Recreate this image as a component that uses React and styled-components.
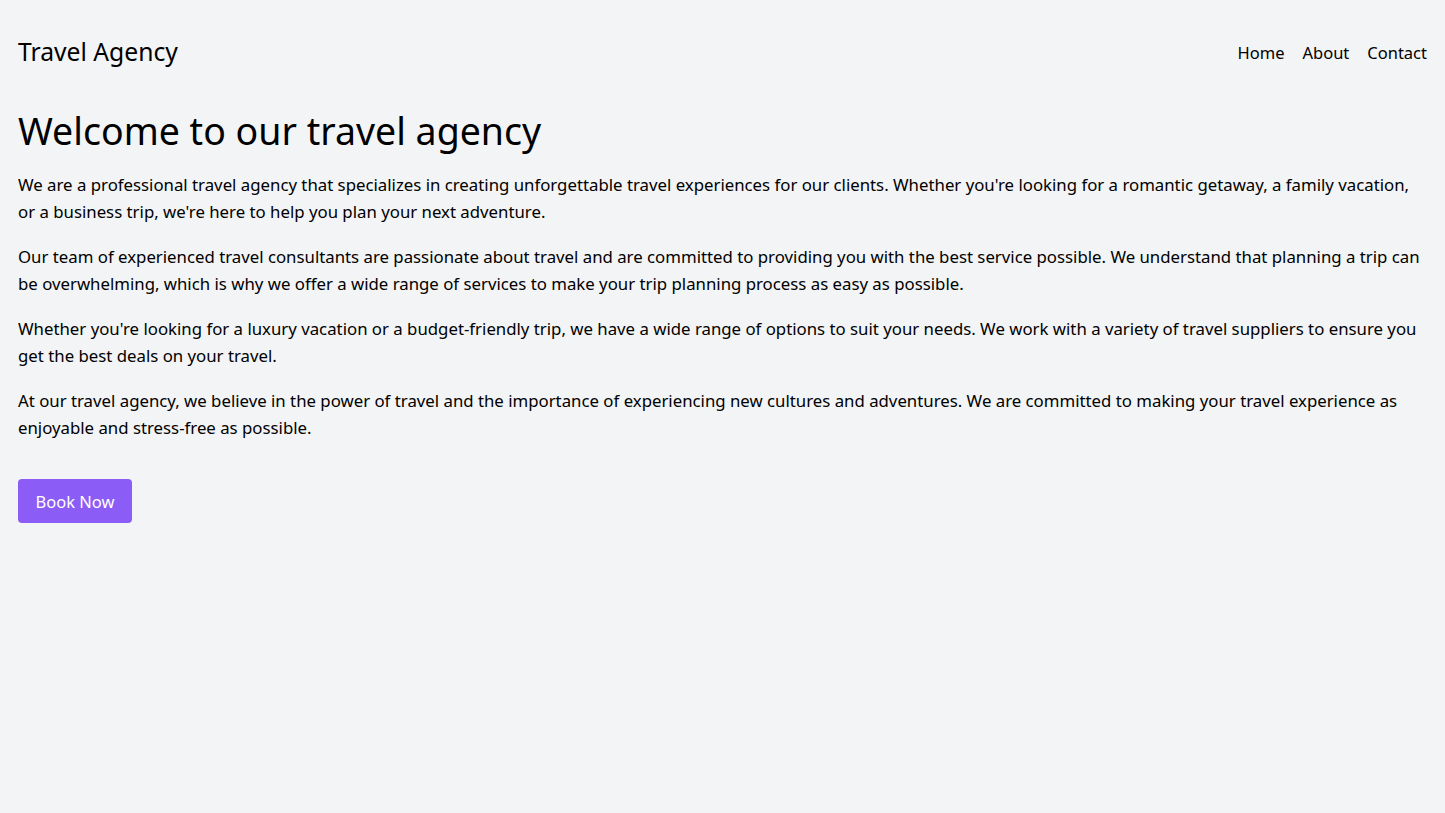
import styled, { createGlobalStyle } from "styled-components";

const GlobalStyle = createGlobalStyle`
  body {
    margin: 0;
    background: #f3f4f6;
    font-family: "Noto Sans", "Liberation Sans", Arial, sans-serif;
    color: #000;
  }
`;

const Page = styled.div`
  padding: 18px;
  min-height: 100vh;
  box-sizing: border-box;
`;

const Header = styled.header`
  display: flex;
  justify-content: space-between;
  align-items: center;
  padding: 18px 0;
`;

const Brand = styled.div`
  font-size: 24.7px;
  line-height: 32px;
`;

const Nav = styled.nav`
  display: flex;
  gap: 18px;
  font-size: 16.5px;
`;

const NavLink = styled.a`
  color: #000;
  text-decoration: none;
`;

const Title = styled.h1`
  font-size: 37.5px;
  font-weight: 400;
  line-height: 45px;
  margin: 22px 0 18px;
`;

const Para = styled.p`
  font-size: 16.8px;
  line-height: 27px;
  margin: 0 0 18px;
`;

const Button = styled.button`
  margin-top: 20px;
  background: #8b5cf6;
  color: #fff;
  border: none;
  border-radius: 4px;
  padding: 0 17.5px;
  height: 44px;
  font-family: inherit;
  font-size: 16.5px;
`;

const App = () => (
  <>
    <GlobalStyle />
    <Page>
      <Header>
        <Brand>Travel Agency</Brand>
        <Nav>
          <NavLink href="#">Home</NavLink>
          <NavLink href="#">About</NavLink>
          <NavLink href="#">Contact</NavLink>
        </Nav>
      </Header>
      <Title>Welcome to our travel agency</Title>
      <Para>
        We are a professional travel agency that specializes in creating unforgettable travel experiences for our clients. Whether you're looking for a romantic getaway, a family vacation, or a business trip, we're here to help you plan your next adventure.
      </Para>
      <Para>
        Our team of experienced travel consultants are passionate about travel and are committed to providing you with the best service possible. We understand that planning a trip can be overwhelming, which is why we offer a wide range of services to make your trip planning process as easy as possible.
      </Para>
      <Para>
        Whether you're looking for a luxury vacation or a budget-friendly trip, we have a wide range of options to suit your needs. We work with a variety of travel suppliers to ensure you get the best deals on your travel.
      </Para>
      <Para>
        At our travel agency, we believe in the power of travel and the importance of experiencing new cultures and adventures. We are committed to making your travel experience as enjoyable and stress-free as possible.
      </Para>
      <Button>Book Now</Button>
    </Page>
  </>
);

export default App;
